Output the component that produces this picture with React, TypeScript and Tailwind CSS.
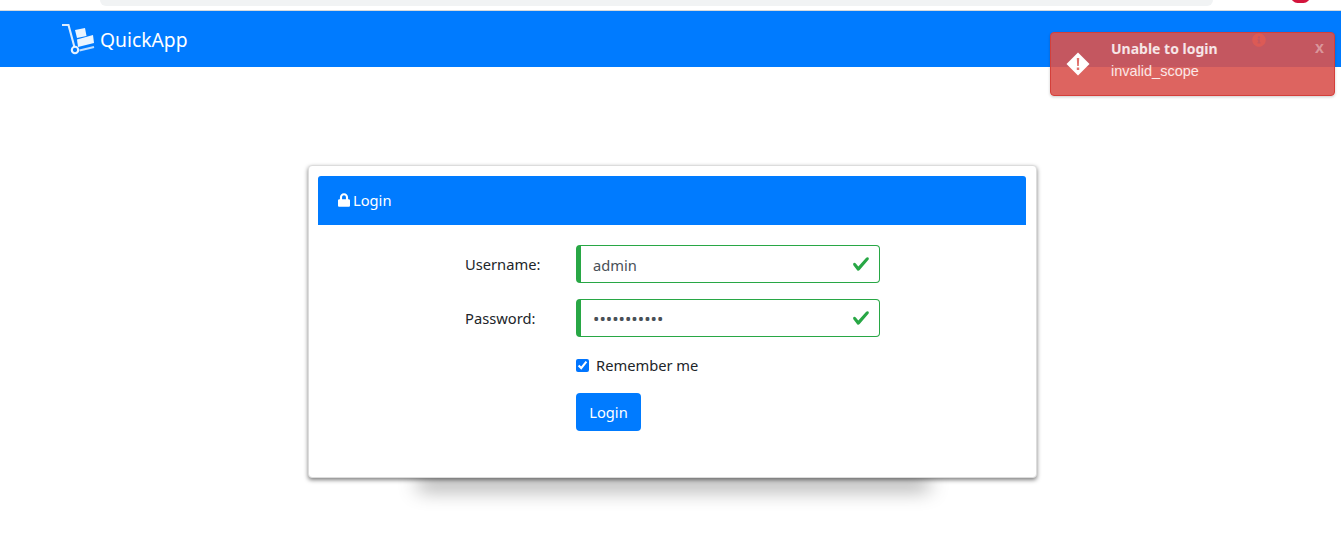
import { FaInfoCircle, FaLock } from 'react-icons/fa'

function ValidCheck() {
  return (
    <svg viewBox="0 0 8 8" className="pointer-events-none absolute right-[10px] top-[10px] h-[18px] w-[18px]" fill="#28a745">
      <path d="M2.3 6.73L.6 4.53c-.4-1.04.46-1.4 1.1-.8l1.1 1.4 3.4-3.8c.6-.63 1.6-.27 1.2.7l-4 4.6c-.43.5-.8.4-1.1.1z" />
    </svg>
  )
}

function HandTruck() {
  return (
    <svg viewBox="61 24 34 31" className="h-[31px] w-[34px]" fill="none">
      <path d="M62 25h6.5l5.8 21.5" stroke="#fff" strokeWidth="2.1" opacity="0.85" />
      <circle cx="75" cy="50" r="3.2" stroke="#fff" strokeWidth="2.1" opacity="0.9" />
      <path d="M79.5 50.5L94 47" stroke="#fff" strokeWidth="2.1" opacity="0.75" />
      <path d="M75 30l10-2 1.5 8-9.5 2z" fill="#fff" opacity="0.92" />
      <path d="M77 39.5l16-4.5 1 8-16 4z" fill="#fff" opacity="0.92" />
    </svg>
  )
}

function Field({ label, type, value }: { label: string; type: string; value: string }) {
  return (
    <div className="flex items-center">
      <label className="w-[111px] text-[#212529]">{label}</label>
      <div className="relative">
        <input
          type={type}
          defaultValue={value}
          className={
            type === 'password'
              ? 'h-[38px] w-[304px] rounded border border-l-[5px] border-[#28a745] bg-white pl-3 pr-9 pt-px text-[17px] text-[#495057] outline-none'
              : 'h-[38px] w-[304px] rounded border border-l-[5px] border-[#28a745] bg-white pl-3 pr-9 pt-px text-[#495057] outline-none'
          }
        />
        <ValidCheck />
      </div>
    </div>
  )
}

export default function App() {
  return (
    <div className="relative h-[551px] overflow-hidden bg-white font-['Noto_Sans',sans-serif] text-[14.7px] leading-[24px]">
      {/* browser leftovers at the top of the capture */}
      <div className="flex h-[10px] items-start justify-between pl-[100px] pr-[31px]">
        <div className="h-[6px] w-[1113px] rounded-b-[10px] bg-[#f1f3f4]" />
        <div className="-mt-[10px] h-[13px] w-[19px] rounded-full bg-[#d3143c]" />
      </div>

      <nav className="flex h-[57px] items-center border-t border-[#d5d9dd] bg-[#007bff] pl-[61px]">
        <HandTruck />
        <span className="ml-[5px] pt-[2px] text-[19.3px] text-white">QuickApp</span>
      </nav>

      <div className="relative ml-[308px] mt-[98px] w-[729px]">
        <div className="absolute bottom-[4px] left-[110px] right-[108px] h-[12px] shadow-[0_15px_20px_rgba(0,0,0,0.42)]" />
        <div className="relative h-[313px] rounded border border-[#dcdcdc] bg-white pb-[9px] pl-[9px] pr-[10px] pt-[10px] shadow-[0_2px_4px_rgba(0,0,0,0.5)]">
          <div className="flex h-[49px] items-center gap-[3px] rounded-t-[3px] bg-[#007bff] pb-[2px] pl-5 text-white">
            <FaLock className="h-[14px] w-[12px]" />
            <span>Login</span>
          </div>
          <div className="ml-[147px] mt-5 flex flex-col gap-4">
            <Field label="Username:" type="text" value="admin" />
            <Field label="Password:" type="password" value="adminpasswd" />
            <div className="ml-[111px] flex flex-col gap-4">
              <label className="flex items-center gap-[7px] text-[#212529]">
                <input type="checkbox" defaultChecked className="h-[13px] w-[13px] accent-[#0075ff]" />
                Remember me
              </label>
              <button className="h-[38px] w-[65px] rounded bg-[#007bff] text-white">Login</button>
            </div>
          </div>
        </div>
      </div>

      {/* toast */}
      <div className="absolute left-[1050px] top-[32px] flex h-[64px] w-[285px] items-center rounded border border-[#d43f3a] bg-[#d9534f]/90 shadow-[0_1px_3px_rgba(0,0,0,0.2)]">
        <svg viewBox="0 0 24 24" className="ml-[15px] h-[24px] w-[24px] shrink-0">
          <path d="M12 .5L23.5 12 12 23.5.5 12z" fill="#fff" />
          <path d="M10.8 6h2.4l-.4 8h-1.6z M10.8 15.5h2.4v2.4h-2.4z" fill="#e0706b" />
        </svg>
        <div className="-mt-[8px] ml-[21px] text-[14px] leading-[22px] text-white/85">
          <div className="font-bold">Unable to login</div>
          <div className="font-['Liberation_Sans',sans-serif] text-[14.5px]">invalid_scope</div>
        </div>
        <FaInfoCircle className="absolute left-[201px] top-0 h-[14px] w-[14px] text-[#dc5a55]" />
        <span className="absolute right-[10px] top-[3px] font-['Liberation_Sans',sans-serif] text-[16px] font-bold text-white/40">x</span>
      </div>
    </div>
  )
}
